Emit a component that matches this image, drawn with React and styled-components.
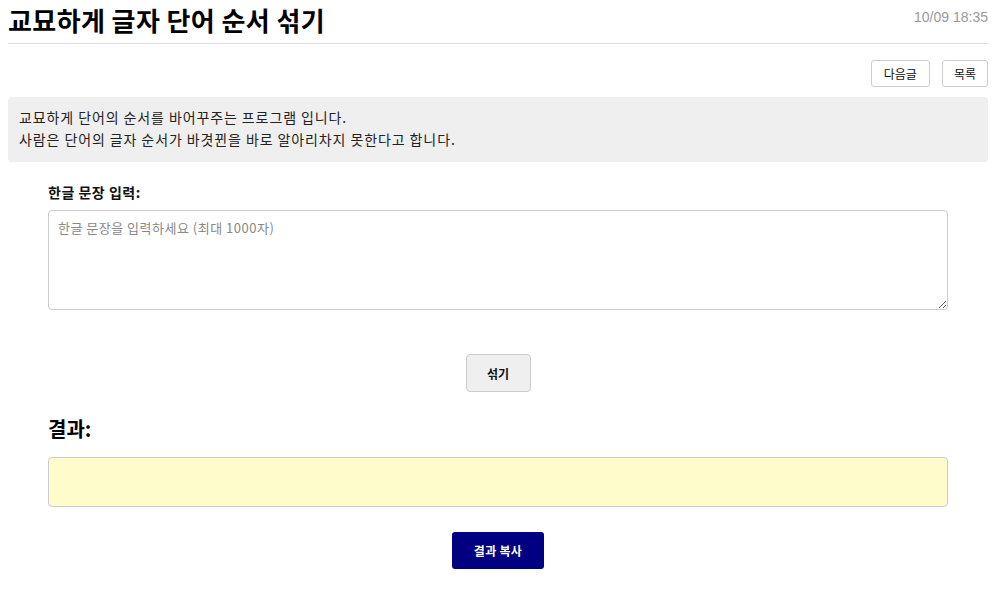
import React, { useState } from 'react'
import styled, { createGlobalStyle } from 'styled-components'

const GlobalStyle = createGlobalStyle`
  body {
    margin: 8px;
    background: #fff;
    color: #111;
    font-family: "Noto Sans CJK KR", "Liberation Sans", sans-serif;
  }
  * { box-sizing: border-box; }
`

const Page = styled.div`
  width: 980px;
`

const Header = styled.div`
  display: flex;
  justify-content: space-between;
  align-items: center;
  height: 36px;
  border-bottom: 1px solid #ddd;
  margin-bottom: 16px;
`

const Title = styled.h1`
  margin: 0;
  font-size: 26px;
  line-height: 22px;
  font-weight: bold;
  color: #000;
  letter-spacing: 0.4px;
  margin-top: -12px;
`

const Date = styled.span`
  font-family: "Liberation Sans", sans-serif;
  font-size: 14px;
  color: #999;
  margin-top: -18px;
`

const NavRow = styled.div`
  display: flex;
  justify-content: flex-end;
  gap: 12px;
  margin-bottom: 10px;
`

const NavButton = styled.button`
  height: 27px;
  padding: 0 ${p => (p.$wide ? '12px' : '11px')};
  background: #fff;
  border: 1px solid #ccc;
  border-radius: 3px;
  font-family: inherit;
  font-size: 12px;
  color: #111;
  cursor: pointer;
`

const Intro = styled.div`
  background: #efefef;
  border-radius: 4px;
  padding: 9px 11px 12px;
  font-size: 14px;
  line-height: 22px;
  letter-spacing: 0.9px;
  color: #222;
`

const Content = styled.div`
  padding: 0 40px;
`

const Label = styled.div`
  margin-top: 20px;
  font-size: 14px;
  font-weight: bold;
  line-height: 20px;
  letter-spacing: 0.5px;
  color: #111;
`

const TextArea = styled.textarea`
  display: block;
  width: 100%;
  height: 100px;
  margin-top: 8px;
  padding: 8px 9px;
  border: 1px solid #ccc;
  border-radius: 4px;
  font-family: inherit;
  font-size: 13px;
  line-height: 18px;
  letter-spacing: 0.5px;
  color: #111;
  resize: vertical;
  &::placeholder { color: #888; }
`

const Center = styled.div`
  display: flex;
  justify-content: center;
  margin-top: ${p => p.$top}px;
`

const ShuffleButton = styled.button`
  width: 65px;
  height: 38px;
  background: #efefef;
  border: 1px solid #ccc;
  border-radius: 4px;
  font-family: inherit;
  font-size: 12px;
  font-weight: bold;
  color: #111;
  cursor: pointer;
`

const ResultTitle = styled.h2`
  margin: 23px 0 0;
  font-size: 20px;
  line-height: 28px;
  font-weight: bold;
  color: #000;
`

const ResultBox = styled.div`
  margin-top: 14px;
  height: 50px;
  background: #fffccc;
  border: 1px solid #ccc;
  border-radius: 4px;
  padding: 12px;
  font-size: 14px;
`

const CopyButton = styled.button`
  width: 92px;
  height: 37px;
  background: #000080;
  border: none;
  border-radius: 3px;
  font-family: inherit;
  font-size: 12px;
  font-weight: bold;
  letter-spacing: 0.3px;
  color: #fff;
  cursor: pointer;
`

function shuffleWord(w) {
  if (w.length < 4) return w
  const mid = w.slice(1, -1).split('')
  for (let i = mid.length - 1; i > 0; i--) {
    const j = Math.floor(Math.random() * (i + 1))
    ;[mid[i], mid[j]] = [mid[j], mid[i]]
  }
  return w[0] + mid.join('') + w[w.length - 1]
}

export default function App() {
  const [text, setText] = useState('')
  const [result, setResult] = useState('')

  const handleShuffle = () => {
    setResult(text.split(' ').map(shuffleWord).join(' '))
  }

  return (
    <Page>
      <GlobalStyle />
      <Header>
        <Title>교묘하게 글자 단어 순서 섞기</Title>
        <Date>10/09 18:35</Date>
      </Header>
      <NavRow>
        <NavButton $wide>다음글</NavButton>
        <NavButton>목록</NavButton>
      </NavRow>
      <Intro>
        교묘하게 단어의 순서를 바어꾸주는 프로그램 입니다.<br />
        사람은 단어의 글자 순서가 바겻뀐을 바로 알아리차지 못한다고 합니다.
      </Intro>
      <Content>
        <Label>한글 문장 입력:</Label>
        <TextArea
          placeholder="한글 문장을 입력하세요 (최대 1000자)"
          maxLength={1000}
          value={text}
          onChange={e => setText(e.target.value)}
        />
        <Center $top={44}>
          <ShuffleButton onClick={handleShuffle}>섞기</ShuffleButton>
        </Center>
        <ResultTitle>결과:</ResultTitle>
        <ResultBox>{result}</ResultBox>
        <Center $top={25}>
          <CopyButton>결과 복사</CopyButton>
        </Center>
      </Content>
    </Page>
  )
}
